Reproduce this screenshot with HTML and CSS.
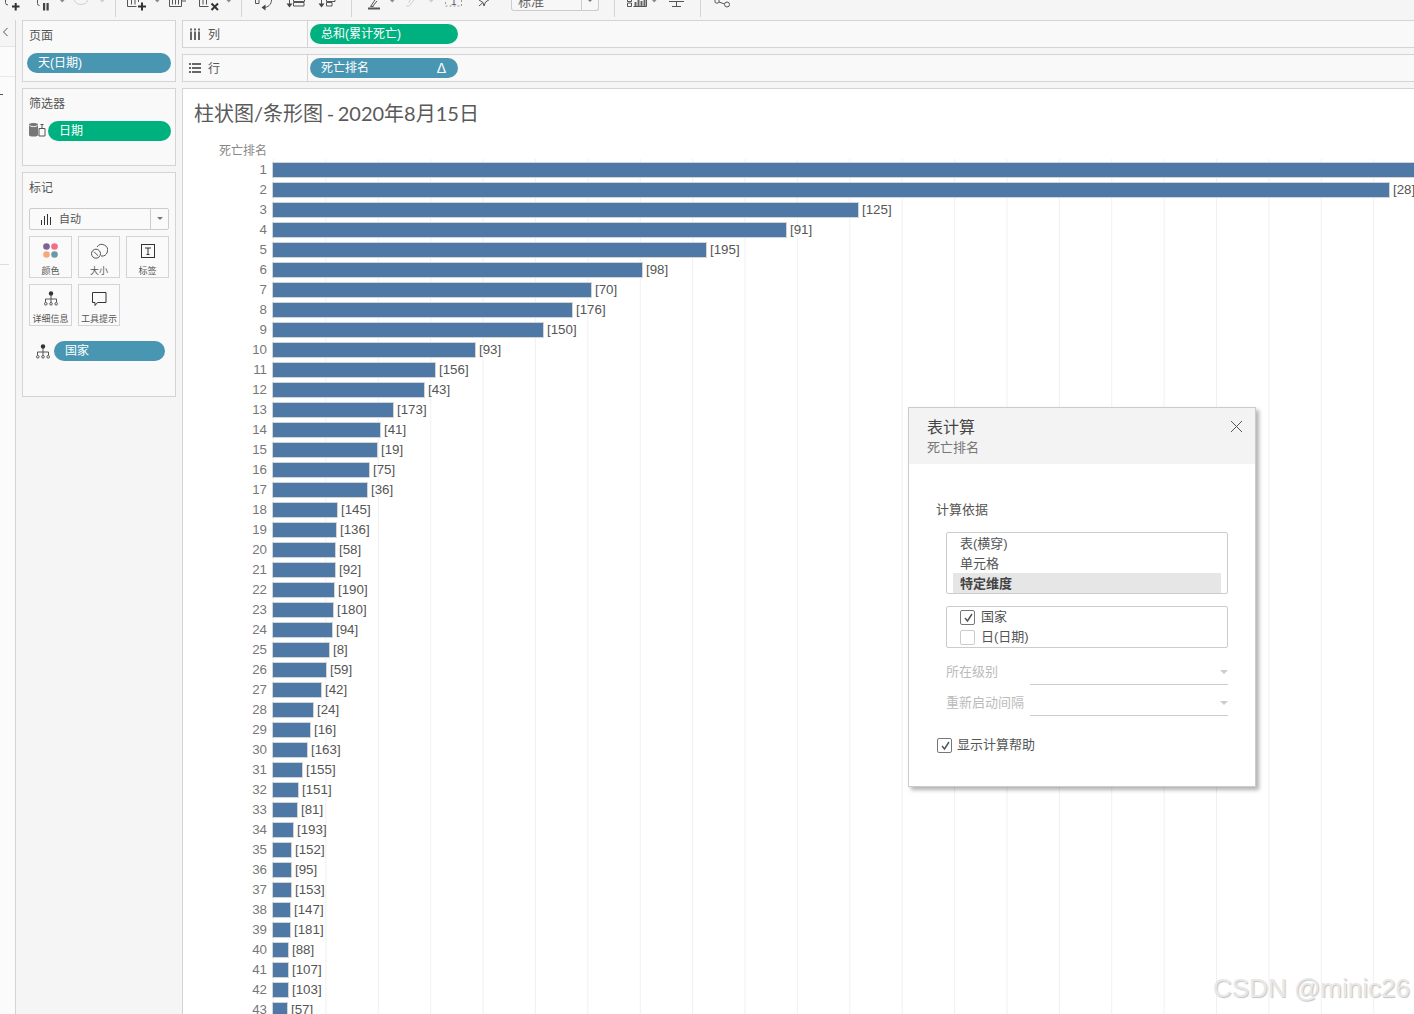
FILE: index.html
```html
<!DOCTYPE html>
<html lang="zh">
<head>
<meta charset="utf-8">
<title>表计算</title>
<link rel="stylesheet" href="styles.css">
</head>
<body>
<header class="toolbar">
  <svg class="tb-group tb-a" viewBox="0 0 115 17">
    <path class="ln" d="M5.500 0v2.500a2.500 2.500 0 0 0 2.500 2.500"/>
    <path class="bold" d="M12 6.500h7.500M15.700 3v7.500"/>
    <path class="ln" d="M37.500 0v3.500a2 2 0 0 0 2 2"/>
    <path class="fill" d="M43 3h2.200v7.500H43zM46.500 3h2.200v7.500h-2.200z"/>
    <path class="tri" d="M60 0h4.500l-2.250 2.500z"/>
    <path class="ln off" d="M74 0a7.500 7 0 0 0 14 0"/>
    <path class="tri off-fill" d="M100 0h4.500l-2.250 2.500z"/>
  </svg>
  <svg class="tb-group tb-b" viewBox="116 0 125 17">
    <path class="ln" d="M127.500 0v6.500h9M131.500 0v4.500M135 0v4.500M138.500 0v2"/>
    <path class="bold" d="M138 6.500h8M142 2.500v8"/>
    <path class="tri" d="M155 0h4.500l-2.250 2.500z"/>
    <path class="ln" d="M169.500 0v6.500h12v-6.500M172.500 0v4.500M175.500 0v4.500M178.500 0v4.500M181.500 1h4.500"/>
    <path class="ln" d="M199.500 0v6.500h9M203 0v4.500M206.500 0v4.500"/>
    <path class="bold" d="M211.500 3.500l6.500 6.500M218 3.500l-6.500 6.500"/>
    <path class="tri" d="M226.500 0h4.500l-2.250 2.500z"/>
  </svg>
  <svg class="tb-group tb-c" viewBox="242 0 109 17">
    <path class="ln" d="M255.500 0v3.500h3.500v-3.500M271.500 0c0 4.500-3.500 7.500-8 7.500"/>
    <path class="fill" d="M265.500 4.500v6l-4-3z"/>
    <path class="ln" d="M289.500 0v6"/>
    <path class="fill" d="M286.500 3.500h6l-3 4z"/>
    <path class="ln" d="M293.500 0v1.500h11v-1.500M293.500 2.500v3.500h10.500v-3.500z"/>
    <path class="ln" d="M321.500 0v6"/>
    <path class="fill" d="M318.500 3.500h6l-3 4z"/>
    <path class="ln" d="M326.500 0v1.500h8.500v-1.500M326.500 2.500v3.500h5.500v-3.500z"/>
  </svg>
  <svg class="tb-group tb-d" viewBox="352 0 159 20">
    <path class="bar" d="M368 8.500h12"/>
    <path class="ln" d="M370.500 6.500L375 0M372.500 6.500L377 1M370.500 6.500h3"/>
    <path class="tri" d="M390 0h4.500l-2.250 2.500z"/>
    <path class="ln off" d="M406 5.500c1.500 1.500 3 .5 4-.5l4-5M408.500 3l2-3"/>
    <path class="tri off-fill" d="M429 0h4.500l-2.250 2.500z"/>
    <rect class="ln dash" x="445.500" y="-4" width="16" height="10"/>
    <text class="tb-num" x="451" y="4.500">1</text>
    <path class="ln" d="M479 0l4 2.500 1 3.500 1.500-4 4-2.500M483 2.500L479 6"/>
  </svg>
  <div class="combo"><span class="combo-text">标准</span><span class="combo-arrow"></span></div>
  <div class="tb-sep tb-gap"></div>
  <svg class="tb-group tb-e" viewBox="615 0 85 17">
    <path class="ln" d="M627.500 0v1.500h4v-1.500M627.500 3h4v3.500h-4z"/>
    <path class="ln" d="M633.500 6.500h13V0"/>
    <path class="thick" d="M635.500 6V2M638.500 6V0M641.500 6V1M644.500 6V0"/>
    <path class="tri" d="M652 0h4.500l-2.250 2.500z"/>
    <path class="ln" d="M669 1.500h15M676.500 1.500v5M672 6.500h9"/>
  </svg>
  <svg class="tb-group tb-f" viewBox="701 0 60 20">
    <circle class="ln" cx="717" cy="1" r="2.200"/>
    <circle class="ln" cx="727" cy="4.500" r="2.500"/>
    <path class="ln" d="M719 2l5.500 2"/>
  </svg>
</header>

<div class="main">
  <aside class="rail">
    <div class="rail-head">
      <svg class="rail-chev" width="7" height="10" viewBox="0 0 7 10"><path class="ln" d="M5.500 1L1.500 5l4 4"/></svg>
    </div>
    <div class="rail-row"></div>
    <div class="rail-tick"></div>
    <div class="rail-rule"></div>
  </aside>

  <div class="side">
    <section class="card card-pages">
      <h3 class="card-title">页面</h3>
      <div class="pill blue">天(日期)</div>
    </section>
    <section class="card card-filters">
      <h3 class="card-title">筛选器</h3>
      <div class="filter-row">
        <svg class="filter-icon" width="17" height="15" viewBox="0 0 17 15">
          <path class="fill-mid" d="M0 2.500C0 .5 9 .5 9 2.500v10.500c0 2-9 2-9 0z"/>
          <path class="ln-light" d="M.5 3.500c1 1.500 7 1.500 8 0"/>
          <path class="ln" d="M10 6.500h6v7.500h-6zM11.500 2.500h3M13 2.500v4"/>
        </svg>
        <div class="pill green filter-pill">日期</div>
      </div>
    </section>
    <section class="card card-marks">
      <h3 class="card-title">标记</h3>
      <div class="select">
        <svg width="11" height="11" viewBox="0 0 11 11"><path class="ln-dark" d="M.5 11V6M3.500 11V2M6.500 11V0M9.500 11V3"/></svg>
        <span class="select-text">自动</span>
        <span class="select-drop"></span>
      </div>
      <div class="mark-grid">
        <div class="mark-btn">
          <svg width="18" height="18" viewBox="0 0 18 18"><circle cx="4.500" cy="4.500" r="3.300" fill="#7b6398"/><circle cx="12.500" cy="4.500" r="3.300" fill="#f56e85"/><circle cx="4.500" cy="12.500" r="3.300" fill="#f5a97f"/><circle cx="12.500" cy="12.500" r="3.300" fill="#6a9aa5"/></svg>
          <span>颜色</span>
        </div>
        <div class="mark-btn">
          <svg width="18" height="18" viewBox="0 0 18 18"><path class="ln" d="M7 5a5.800 5.800 0 1 1 4 9"/><circle class="ln" cx="6" cy="11.700" r="4.500"/><path class="ln" d="M4 9.700l4 4"/></svg>
          <span>大小</span>
        </div>
        <div class="mark-btn">
          <svg width="18" height="18" viewBox="0 0 18 18"><rect class="ln-dark" x="2.500" y="2.500" width="13" height="13"/><path class="ln-dark" d="M6 6h6M9 6v6.500M7.500 12.500h3"/></svg>
          <span>标签</span>
        </div>
        <div class="mark-btn">
          <svg class="tree-icon" width="14" height="17" viewBox="0 0 14 17"><circle cx="7" cy="3.500" r="2.200" fill="#333"/><path class="ln" d="M7 5v4M1.500 12V9h11v3M7 9v3"/><circle class="ln" cx="1.800" cy="13.800" r="1.300"/><circle class="ln" cx="7" cy="13.800" r="1.300"/><circle class="ln" cx="12.200" cy="13.800" r="1.300"/></svg>
          <span>详细信息</span>
        </div>
        <div class="mark-btn">
          <svg width="18" height="18" viewBox="0 0 18 18"><path class="ln-dark" d="M2.500 2.500h13.500v10H7.500l-2.500 3v-3H2.500z"/></svg>
          <span>工具提示</span>
        </div>
      </div>
      <div class="detail-row">
        <svg width="14" height="15" viewBox="0 0 14 15"><circle cx="7" cy="2.500" r="2.200" fill="#333"/><path class="ln" d="M7 4v4M1.500 11V8h11v3M7 8v3"/><circle class="ln" cx="1.800" cy="12.800" r="1.300"/><circle class="ln" cx="7" cy="12.800" r="1.300"/><circle class="ln" cx="12.200" cy="12.800" r="1.300"/></svg>
        <div class="pill blue detail-pill">国家</div>
      </div>
    </section>
  </div>

  <div class="work">
    <div class="shelf">
      <div class="shelf-head">
        <svg width="12" height="12" viewBox="0 0 12 12"><path class="fill-dark" d="M1 3.500h2v8.500H1zM1 .5h2v2H1zM5 3.500h2v8.500H5zM5 .5h2v2H5zM9 3.500h2v8.500H9zM9 .5h2v2H9z"/></svg>
        <span class="shelf-name">列</span>
      </div>
      <div class="pill green shelf-pill">总和(累计死亡)</div>
    </div>
    <div class="shelf">
      <div class="shelf-head">
        <svg width="12" height="12" viewBox="0 0 12 12"><path class="fill-dark" d="M0 1h2v2H0zM3 1h9v2H3zM0 5h2v2H0zM3 5h9v2H3zM0 9h2v2H0zM3 9h9v2H3z"/></svg>
        <span class="shelf-name">行</span>
      </div>
      <div class="pill blue shelf-pill"><span>死亡排名</span><span class="delta">Δ</span></div>
    </div>
    <div class="view">
      <h1 class="view-title">柱状图/条形图 - 2020年8月15日</h1>
      <div class="chart">
        <div class="axis">
          <div class="axis-title">死亡排名</div>
          <div>1</div><div>2</div><div>3</div><div>4</div><div>5</div><div>6</div><div>7</div><div>8</div><div>9</div><div>10</div>
          <div>11</div><div>12</div><div>13</div><div>14</div><div>15</div><div>16</div><div>17</div><div>18</div><div>19</div><div>20</div>
          <div>21</div><div>22</div><div>23</div><div>24</div><div>25</div><div>26</div><div>27</div><div>28</div><div>29</div><div>30</div>
          <div>31</div><div>32</div><div>33</div><div>34</div><div>35</div><div>36</div><div>37</div><div>38</div><div>39</div><div>40</div>
          <div>41</div><div>42</div><div>43</div>
        </div>
        <div class="plot">
          <div class="row"><i class="bar-box" style="width:1250px"></i></div>
          <div class="row"><i class="bar-box" style="width:1118px"></i><span>[28]</span></div>
          <div class="row"><i class="bar-box" style="width:587px"></i><span>[125]</span></div>
          <div class="row"><i class="bar-box" style="width:515px"></i><span>[91]</span></div>
          <div class="row"><i class="bar-box" style="width:435px"></i><span>[195]</span></div>
          <div class="row"><i class="bar-box" style="width:371px"></i><span>[98]</span></div>
          <div class="row"><i class="bar-box" style="width:320px"></i><span>[70]</span></div>
          <div class="row"><i class="bar-box" style="width:301px"></i><span>[176]</span></div>
          <div class="row"><i class="bar-box" style="width:272px"></i><span>[150]</span></div>
          <div class="row"><i class="bar-box" style="width:204px"></i><span>[93]</span></div>
          <div class="row"><i class="bar-box" style="width:164px"></i><span>[156]</span></div>
          <div class="row"><i class="bar-box" style="width:153px"></i><span>[43]</span></div>
          <div class="row"><i class="bar-box" style="width:122px"></i><span>[173]</span></div>
          <div class="row"><i class="bar-box" style="width:109px"></i><span>[41]</span></div>
          <div class="row"><i class="bar-box" style="width:106px"></i><span>[19]</span></div>
          <div class="row"><i class="bar-box" style="width:98px"></i><span>[75]</span></div>
          <div class="row"><i class="bar-box" style="width:96px"></i><span>[36]</span></div>
          <div class="row"><i class="bar-box" style="width:66px"></i><span>[145]</span></div>
          <div class="row"><i class="bar-box" style="width:65px"></i><span>[136]</span></div>
          <div class="row"><i class="bar-box" style="width:64px"></i><span>[58]</span></div>
          <div class="row"><i class="bar-box" style="width:64px"></i><span>[92]</span></div>
          <div class="row"><i class="bar-box" style="width:63px"></i><span>[190]</span></div>
          <div class="row"><i class="bar-box" style="width:62px"></i><span>[180]</span></div>
          <div class="row"><i class="bar-box" style="width:61px"></i><span>[94]</span></div>
          <div class="row"><i class="bar-box" style="width:58px"></i><span>[8]</span></div>
          <div class="row"><i class="bar-box" style="width:55px"></i><span>[59]</span></div>
          <div class="row"><i class="bar-box" style="width:50px"></i><span>[42]</span></div>
          <div class="row"><i class="bar-box" style="width:42px"></i><span>[24]</span></div>
          <div class="row"><i class="bar-box" style="width:39px"></i><span>[16]</span></div>
          <div class="row"><i class="bar-box" style="width:36px"></i><span>[163]</span></div>
          <div class="row"><i class="bar-box" style="width:31px"></i><span>[155]</span></div>
          <div class="row"><i class="bar-box" style="width:27px"></i><span>[151]</span></div>
          <div class="row"><i class="bar-box" style="width:26px"></i><span>[81]</span></div>
          <div class="row"><i class="bar-box" style="width:22px"></i><span>[193]</span></div>
          <div class="row"><i class="bar-box" style="width:20px"></i><span>[152]</span></div>
          <div class="row"><i class="bar-box" style="width:20px"></i><span>[95]</span></div>
          <div class="row"><i class="bar-box" style="width:20px"></i><span>[153]</span></div>
          <div class="row"><i class="bar-box" style="width:19px"></i><span>[147]</span></div>
          <div class="row"><i class="bar-box" style="width:19px"></i><span>[181]</span></div>
          <div class="row"><i class="bar-box" style="width:17px"></i><span>[88]</span></div>
          <div class="row"><i class="bar-box" style="width:17px"></i><span>[107]</span></div>
          <div class="row"><i class="bar-box" style="width:17px"></i><span>[103]</span></div>
          <div class="row"><i class="bar-box" style="width:16px"></i><span>[57]</span></div>
        </div>
      </div>
    </div>
  </div>
</div>

<div class="dialog">
  <div class="dialog-head">
    <div class="dialog-title">表计算</div>
    <div class="dialog-sub">死亡排名</div>
    <svg class="dialog-close" width="13" height="13" viewBox="0 0 13 13"><path class="ln" d="M1 1l11 11M12 1L1 12"/></svg>
  </div>
  <div class="dialog-body">
    <div class="field-label">计算依据</div>
    <div class="list">
      <div class="list-item">表(横穿)</div>
      <div class="list-item">单元格</div>
      <div class="list-item selected">特定维度</div>
    </div>
    <div class="list checks">
      <div class="check-row">
        <span class="check"><svg width="13" height="13" viewBox="0 0 13 13"><path class="tick" d="M3 7l2.500 3L10 3"/></svg></span>
        <span>国家</span>
      </div>
      <div class="check-row">
        <span class="check unchecked"></span>
        <span>日(日期)</span>
      </div>
    </div>
    <div class="field first">
      <span class="field-name">所在级别</span>
      <span class="field-value"><i class="field-arrow"></i></span>
    </div>
    <div class="field">
      <span class="field-name">重新启动间隔</span>
      <span class="field-value"><i class="field-arrow"></i></span>
    </div>
    <div class="check-row help">
      <span class="check"><svg width="13" height="13" viewBox="0 0 13 13"><path class="tick" d="M3 7l2.500 3L10 3"/></svg></span>
      <span>显示计算帮助</span>
    </div>
  </div>
</div>

<div class="watermark">CSDN @minic26</div>
</body>
</html>
```
FILE: styles.css
```css
* { box-sizing: border-box; }
html, body { margin: 0; height: 100%; overflow: hidden; }
body {
  position: relative;
  font-family: "Liberation Sans", "Noto Sans CJK SC", sans-serif;
  font-size: 12px;
  line-height: 20px;
  color: #555;
  background: #f5f5f5;
}
svg { display: block; flex: none; overflow: hidden; }

/* shared svg strokes */
.ln { fill: none; stroke: #555; stroke-width: 1; }
.ln-dark { fill: none; stroke: #333; stroke-width: 1; }
.ln-light { fill: none; stroke: #eee; stroke-width: 1; }
.bold { fill: none; stroke: #333; stroke-width: 2; }
.thick { fill: none; stroke: #666; stroke-width: 2; }
.bar { fill: none; stroke: #555; stroke-width: 2; }
.fill { fill: #444; }
.fill-dark { fill: #666; }
.fill-mid { fill: #777; }
.tri { fill: #888; }
.off { stroke: #d0d0d0; }
.off-fill { fill: #ccc; }
.dash { stroke: #999; stroke-dasharray: 2 2; }
.tb-num { font-size: 10px; fill: #555; }
.tick { fill: none; stroke: #555; stroke-width: 1.500; }

/* toolbar */
.toolbar { display: flex; height: 20px; overflow: hidden; }
.tb-group { height: 20px; }
.tb-a { width: 115px; }
.tb-b { width: 125px; }
.tb-c { width: 109px; }
.tb-d { width: 159px; }
.tb-e { width: 85px; }
.tb-f { width: 60px; }
.tb-a, .tb-b, .tb-c, .tb-e { box-sizing: content-box; height: 17px; border-right: 1px solid #d4d4d4; }
.combo {
  width: 88px; height: 11px; display: flex; overflow: hidden;
  border: 1px solid #ccc; border-top: 0; border-radius: 0 0 3px 3px; background: #f7f7f7;
}
.combo-text { flex: 1; margin-top: -8px; padding-left: 6px; font-size: 13px; line-height: 20px; height: 20px; color: #666; border-right: 1px solid #ccc; }
.combo-arrow { width: 16px; }
.combo-arrow::after { content: ""; display: block; margin: 0 auto; width: 0; border: 2.500px solid transparent; border-top-color: #777; border-bottom: 0; }
.tb-sep { width: 1px; height: 17px; background: #d4d4d4; }
.tb-gap { margin-left: 15px; }

/* main layout */
.main { display: flex; gap: 6px; height: 994px; }
.rail { width: 16px; border-right: 1px solid #d4d4d4; background: #fbfbfb; }
.rail-head { height: 27px; background: #f5f5f5; border-bottom: 1px solid #e4e4e4; padding: 7px 0 0 2px; }
.rail-row { height: 30px; border-bottom: 1px solid #e8e8e8; }
.rail-tick { width: 3px; height: 1px; margin-top: 17px; background: #555; }
.rail-rule { width: 9px; height: 1px; margin-top: 169px; background: #ddd; }
.side { width: 154px; display: flex; flex-direction: column; gap: 6px; }
.card { border: 1px solid #d4d4d4; background: #f9f9f9; padding: 0 4px; }
.card-pages { height: 62px; }
.card-filters { height: 78px; }
.card-marks { height: 225px; }
.card-title { height: 28px; margin: 0 0 4px; padding-left: 2px; font-size: 12px; font-weight: 400; line-height: 30px; color: #555; }

/* pills */
.pill { height: 20px; border-radius: 10px; color: #fff; line-height: 21px; padding-left: 11px; font-size: 12px; }
.blue { background: #4996b2; }
.green { background: #00b180; }
.filter-row { display: flex; align-items: center; gap: 2px; padding-left: 2px; }
.filter-icon { margin-top: -3px; }
.filter-pill { flex: 1; }

/* marks */
.select {
  display: flex; align-items: center; height: 22px; margin: 7px 2px 6px; padding-left: 11px;
  border: 1px solid #ccc; border-radius: 2px; background: #fafafa;
}
.select-text { margin-left: 7px; flex: 1; font-size: 11px; }
.select-drop { width: 18px; height: 20px; border-left: 1px solid #ccc; position: relative; }
.select-drop::after {
  content: ""; position: absolute; left: 5.500px; top: 8px;
  border: 3.500px solid transparent; border-top-color: #777; border-bottom: 0;
}
.mark-grid { display: grid; grid-template-columns: 43px 42px 43px; grid-auto-rows: 42px; gap: 6px; margin: 0 2px; }
.mark-btn {
  display: flex; flex-direction: column; align-items: center; padding-top: 5px;
  border: 1px solid #d4d4d4; background: #fafafa; font-size: 9px; line-height: 12px; color: #555;
}
.mark-btn span { margin-top: 5px; white-space: nowrap; }
.mark-btn .tree-icon { margin-bottom: 1px; }
.detail-row { display: flex; align-items: center; gap: 4px; margin-top: 15px; padding-left: 9px; padding-right: 6px; }
.detail-pill { flex: 1; }

/* shelves */
.work { flex: 1; min-width: 0; display: flex; flex-direction: column; }
.shelf { display: flex; align-items: center; height: 28px; margin-bottom: 6px; border: 1px solid #d4d4d4; border-right: 0; background: #f9f9f9; }
.shelf-head { display: flex; align-items: center; gap: 7px; width: 125px; height: 100%; padding-left: 6px; border-right: 1px solid #d4d4d4; }
.shelf-name { padding-top: 2px; }
.shelf-pill { display: flex; justify-content: space-between; width: 148px; margin-left: 2px; padding-right: 12px; }
.delta { font-size: 14px; }

/* view */
.view { flex: 1; min-height: 0; overflow: hidden; border: 1px solid #d4d4d4; border-width: 1px 0 0 1px; background: #fff; }
.view-title { margin: 10px 0 13px 11px; font-family: Lato, "Noto Sans CJK SC", sans-serif; font-size: 20px; line-height: 29px; height: 30px; font-weight: 400; word-spacing: -1.500px; color: #5a5a5a; white-space: nowrap; }
.chart { display: flex; gap: 5px; }
.axis { width: 84px; flex: none; text-align: right; font-size: 13.33px; line-height: 22px; color: #777; }
.axis > div { height: 20px; }
.axis > .axis-title { height: 17px; font-size: 12px; line-height: 19px; color: #888; }
.plot {
  flex: 1; min-width: 0; margin-top: 17px; padding-top: 1px;
  background-image: linear-gradient(90deg, #f0f0f0 1px, transparent 1px);
  background-size: 52.4px 100%;
  background-position: 1px 0;
}
.row { display: flex; align-items: center; gap: 3px; height: 20px; font-size: 13.33px; color: #555; white-space: nowrap; }
.bar-box { flex: none; height: 16px; background: #4e79a7; border: 1px solid #d4d4d4; }

/* dialog */
.dialog {
  position: absolute; left: 908px; top: 407px; width: 348px; height: 380px;
  border: 1px solid #ccc; background: #fff; box-shadow: 3px 3px 4px rgba(0, 0, 0, .3); font-size: 13px;
}
.dialog-head { position: relative; height: 56px; padding: 10px 0 0 18px; background: #f3f3f3; }
.dialog-title { font-size: 16px; color: #444; }
.dialog-sub { color: #777; }
.dialog-close { position: absolute; left: 321px; top: 12px; }
.dialog-body { padding: 35px 27px 0; }
.field-label { height: 20px; line-height: 21px; color: #555; margin-bottom: 13px; }
.list { width: 282px; margin-left: 10px; border: 1px solid #ccc; border-radius: 2px; }
.list-item { height: 20px; margin: 0 6px; padding-left: 7px; line-height: 21px; color: #555; }
.selected { background: #e6e6e6; font-weight: 700; color: #444; }
.checks { margin-top: 12px; height: 42px; padding-left: 13px; }
.check-row { display: flex; align-items: center; gap: 6px; height: 20px; color: #555; }
.check { width: 15px; height: 15px; padding: 0 0 0 1px; border: 1px solid #777; border-radius: 2px; background: #fff; }
.unchecked { border-color: #ccc; }
.field { display: flex; height: 25px; width: 282px; margin: 6px 0 0 10px; color: #bbb; }
.field.first { margin-top: 12px; }
.field-name { width: 84px; line-height: 24px; white-space: nowrap; }
.field-value { flex: 1; position: relative; border-bottom: 1px solid #ccc; }
.field-arrow {
  position: absolute; right: 0; top: 10px;
  border: 4px solid transparent; border-top-color: #ccc; border-bottom: 0;
}
.help { margin: 19px 0 0 1px; gap: 5px; }

/* watermark */
.watermark {
  position: absolute; left: 1213px; top: 972px; font-size: 26px; line-height: 32px; color: #e8e8e8;
  text-shadow: 1px 1px 1px #c4c4c4; white-space: nowrap;
}
```
